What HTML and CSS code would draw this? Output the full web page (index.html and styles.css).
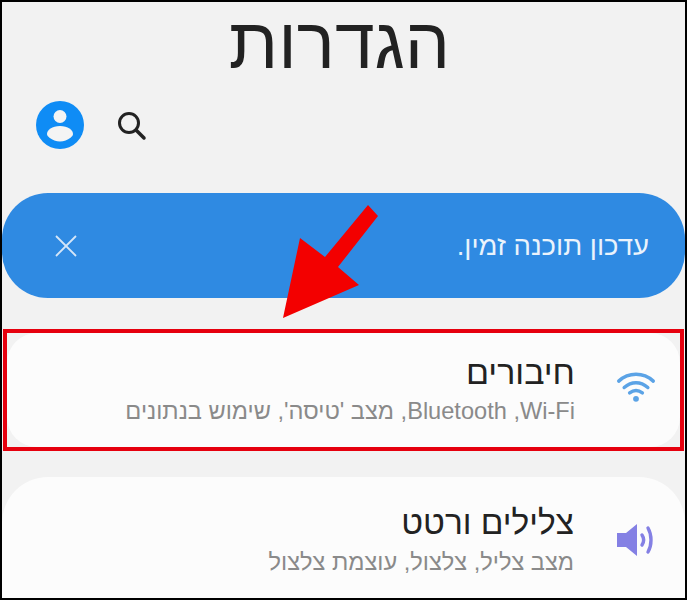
FILE: index.html
```html
<!DOCTYPE html>
<html lang="he" dir="rtl">
<head>
    <meta charset="UTF-8">
    <meta name="viewport" content="width=device-width, initial-scale=1.0">
    <title>הגדרות</title>
    <link rel="stylesheet" href="styles.css">
</head>
<body>
    <div class="frame">
        <h1 class="headline">הגדרות</h1>

        <!-- כלים עליונים -->
        <div class="tools">
            <svg class="avatar" viewBox="0 0 48 48" width="48" height="48">
                <circle cx="24" cy="24" r="24" fill="#0f8cf5"/>
                <circle cx="24" cy="15.5" r="6.5" fill="#f4f4f4"/>
                <path d="M24 25c-8 0-13 4-13 8 0 1.500 1 2.500 2.500 3.800 3 2.400 6.500 3.700 10.500 3.700s7.500-1.300 10.500-3.700c1.500-1.300 2.500-2.300 2.500-3.800 0-4-5-8-13-8z" fill="#f4f4f4"/>
            </svg>
            <svg class="search" viewBox="0 0 32 32" width="32" height="32">
                <circle cx="14" cy="14" r="9.500" fill="none" stroke="#222" stroke-width="3"/>
                <path d="M21 21l8 8" stroke="#222" stroke-width="3.500" stroke-linecap="round"/>
            </svg>
        </div>

        <div class="banner">
            <span class="banner-text">עדכון תוכנה זמין.</span>
            <svg class="close" viewBox="0 0 24 24" width="24" height="24">
                <path d="M2 2l20 20M22 2L2 22" stroke="#d5e6f8" stroke-width="1.800"/>
            </svg>
        </div>

        <div class="highlight">
            <div class="card card-first">
                <svg class="row-icon icon-wifi" viewBox="0 0 44 36" width="40" height="33">
                    <g fill="none" stroke="#5ba3e6" stroke-width="3.800" stroke-linecap="round">
                        <path d="M3 11C14 1 30 1 41 11"/>
                        <path d="M9 18c8-7 18-7 26 0"/>
                        <path d="M15 24c4.500-3.500 9.500-3.500 14 0"/>
                    </g>
                    <circle cx="22" cy="30.500" r="3.200" fill="#5ba3e6"/>
                </svg>
                <div class="row-text">
                    <div class="row-title">חיבורים</div>
                    <div class="row-sub">Wi-Fi&rlm;, Bluetooth&rlm;, מצב 'טיסה', שימוש בנתונים</div>
                </div>
            </div>
        </div>

        <div class="card card-second">
            <svg class="row-icon icon-sound" viewBox="0 0 44 36" width="44" height="36">
                <path d="M4 11h9L24 2v32L13 25H4z" fill="#8480e4"/>
                <g fill="none" stroke="#8480e4" stroke-width="3.400" stroke-linecap="round">
                    <path d="M29 13c2 3 2 7 0 10"/>
                    <path d="M35 6c4 7 4 17 0 24"/>
                </g>
            </svg>
            <div class="row-text">
                <div class="row-title title-wide">צלילים ורטט</div>
                <div class="row-sub">מצב צליל, צלצול, עוצמת צלצול</div>
            </div>
        </div>

        <!-- חץ סימון -->
        <svg class="arrow" viewBox="0 0 110 125" width="110" height="125">
            <path d="M13 118L30 38 55 57 98 5 108 16 68 67 89 85z" fill="#f30000"/>
        </svg>
    </div>
</body>
</html>
```

FILE: styles.css
```css
/* בסיס */
html, body {
    margin: 0;
    height: 100%;
    overflow: hidden;
}

body {
    background-color: #000;
    font-family: "Liberation Sans", "DejaVu Sans", sans-serif;
}

.frame {
    position: relative;
    box-sizing: border-box;
    width: 687px;
    height: 600px;
    border: 2px solid #000;
    background-color: #f2f2f2;
    overflow: hidden;
}

.headline {
    margin: 0;
    padding: 4px 8px 0 0;
    height: 76px;
    text-align: center;
    font-size: 71.500px;
    line-height: 74px;
    font-weight: normal;
    color: #222;
}

/* כלים עליונים */
.tools {
    display: flex;
    direction: ltr;
    align-items: center;
    gap: 31px;
    padding: 19px 0 0 34px;
}

.avatar {
    display: block;
}

.search {
    display: block;
}

/* באנר עדכון */
.banner {
    display: flex;
    justify-content: space-between;
    align-items: center;
    box-sizing: border-box;
    height: 105px;
    margin-top: 44px;
    padding: 0 36px 0 52px;
    border-radius: 46px;
    background-color: #2f8ae2;
    color: #eaf3fc;
    font-size: 27.5px;
}

.close {
    display: block;
}

/* מסגרת אדומה */
.highlight {
    box-sizing: border-box;
    height: 122px;
    margin: 31px 1px 0 1px;
    border: 4px solid #e6000e;
}

.card {
    display: flex;
    align-items: flex-start;
    gap: 39px;
    background-color: #fcfcfc;
}

.card-first {
    gap: 41px;
    height: 100%;
    padding-right: 24px;
    padding-top: 18px;
    box-sizing: border-box;
    border-radius: 30px;
}

.card-second {
    height: 130px;
    margin-top: 26px;
    padding-right: 28px;
    padding-top: 25px;
    box-sizing: border-box;
    border-radius: 46px 46px 0 0;
}

.row-icon {
    display: block;
    flex: none;
    margin-top: 18px;
}

.icon-wifi {
    margin-top: 20px;
}

.icon-sound {
    margin-top: 20px;
}

.row-title {
    font-size: 34px;
    line-height: 42px;
    color: #222;
}

.title-wide {
    font-size: 33.500px;
}

.row-sub {
    font-size: 23.600px;
    line-height: 37px;
    color: #8a8a8a;
}

/* חץ */
.arrow {
    position: absolute;
    left: 268px;
    top: 198px;
}
```
